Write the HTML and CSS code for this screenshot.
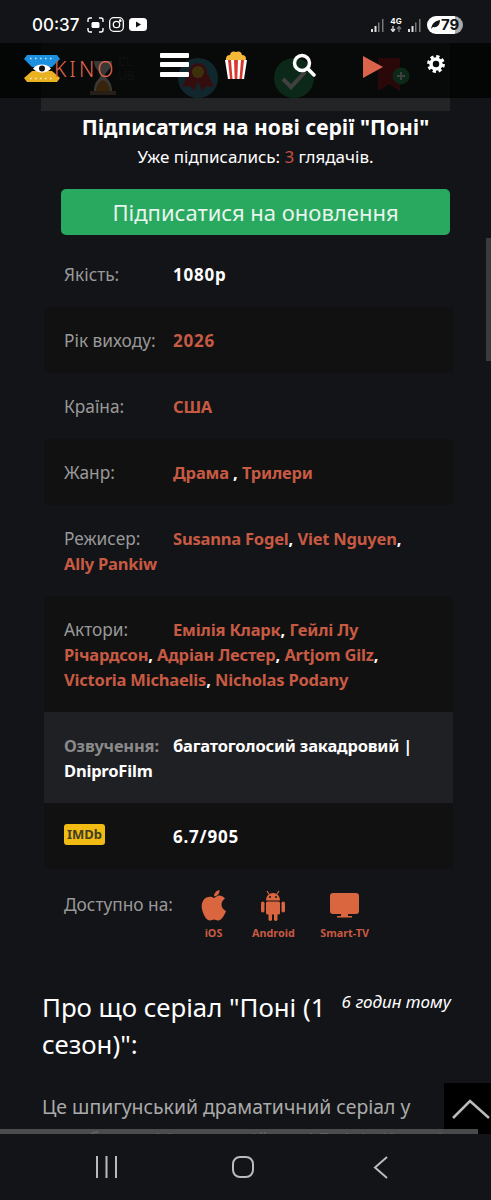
FILE: index.html
```html
<!DOCTYPE html>
<html lang="uk">
<head>
    <meta charset="utf-8">
    <meta content="initial-scale=1, width=device-width" name="viewport">
    <title>Поні</title>
    <link rel="stylesheet" href="styles.css">
</head>

<body>
    <div class="status">
        <span class="clock">00:37</span>
        <svg class="status-icon" width="17" height="16" viewBox="0 0 17 16" fill="none" stroke="#fff" stroke-width="1.4">
            <path d="M1 5V3a2 2 0 0 1 2-2h2M12 1h2a2 2 0 0 1 2 2v2M16 11v2a2 2 0 0 1-2 2h-2M5 15H3a2 2 0 0 1-2-2v-2"/>
            <rect x="4.500" y="5" width="8" height="6" rx="1.500" fill="#fff" stroke="none"/>
        </svg>
        <svg class="status-icon" width="15" height="15" viewBox="0 0 15 15" fill="none" stroke="#fff" stroke-width="1.300">
            <rect x="0.700" y="0.700" width="13.600" height="13.600" rx="4"/>
            <circle cx="7.500" cy="7.500" r="3.200"/>
            <circle cx="11.300" cy="3.700" r="0.700" fill="#fff"/>
        </svg>
        <svg class="status-icon" width="18" height="13" viewBox="0 0 18 13">
            <rect width="18" height="13" rx="3.500" fill="#fff"/>
            <path d="M7 3.500v6l5-3z" fill="#131417"/>
        </svg>
        <div class="status-right">
            <svg width="13" height="14" viewBox="0 0 13 14" fill="#777">
                <rect x="0" y="11" width="2" height="3" fill="#ddd"/><rect x="3.500" y="8" width="2" height="6" fill="#ddd"/><rect x="7" y="4.500" width="1.500" height="9.500"/><rect x="11" y="1" width="1.500" height="13"/>
            </svg>
            <span class="net">4G<svg width="12" height="6" viewBox="0 0 12 6" fill="none" stroke-width="1.300"><path d="M3 0v5M1 3l2 2.500L5 3" stroke="#ddd"/><path d="M9 6V1M7 3l2-2.500L11 3" stroke="#777"/></svg></span>
            <svg width="13" height="14" viewBox="0 0 13 14" fill="#777">
                <rect x="0" y="11" width="2" height="3" fill="#ddd"/><rect x="3.500" y="8" width="2" height="6" fill="#ddd"/><rect x="7" y="4.500" width="1.500" height="9.500"/><rect x="11" y="1" width="1.500" height="13"/>
            </svg>
            <span class="battery">
                <svg width="11" height="11" viewBox="0 0 11 11"><path d="M1 10C2 4 5 2 10 1 10 6 7 9 3 8z" fill="#131417"/></svg>79
            </span>
        </div>
    </div>

    <div class="page">
        <!-- icon strip that scrolled under the fixed menu -->
        <div class="actions">
            <svg class="action-hourglass" width="26" height="37" viewBox="0 0 26 37">
                <rect width="26" height="4" y="33" fill="#9c7a62"/>
                <path d="M4 3h18c0 8-6 10-7 14 1 4 7 6 7 16H4c0-10 6-12 7-16C10 13 4 11 4 3z" fill="#e9e3dc"/>
                <path d="M6 33c0-6 4-10 7-11 3 1 7 5 7 11z" fill="#e08b2e"/>
            </svg>
            <svg class="action-medal" width="40" height="40" viewBox="0 0 40 40">
                <circle cx="20" cy="20" r="20" fill="#3f9bb5"/>
                <path d="M10 16 4 29l8-1 4 5 5-12zM30 16l6 13-8-1-4 5-5-12z" fill="#d8343f"/>
                <circle cx="20" cy="14" r="9" fill="#d8343f"/>
                <circle cx="20" cy="14" r="6" fill="#f2c230"/>
            </svg>
            <svg class="action-check" width="40" height="40" viewBox="0 0 40 40">
                <circle cx="20" cy="20" r="20" fill="#2f9e5f"/>
                <path d="M9 21l8 8 14-15" fill="none" stroke="#fff" stroke-width="4"/>
            </svg>
            <svg class="action-mark" width="32" height="34" viewBox="0 0 32 34">
                <path d="M0 0h22v33L11 26 0 33z" fill="#a81d26"/>
                <circle cx="23" cy="18" r="8.500" fill="#2f9e5f"/>
                <path d="M23 14v8M19 18h8" stroke="#fff" stroke-width="2"/>
            </svg>
        </div>

        <div class="subscribe">
            <h2>Підписатися на нові серії "Поні"</h2>
            <p>Уже підписались: <span class="count">3</span> глядачів.</p>
            <button class="subscribe-btn">Підписатися на оновлення</button>
        </div>

        <ul class="info">
            <li><span class="label">Якість:</span><b class="num">1080p</b></li>
            <li class="dark"><span class="label">Рік виходу:</span><a class="num">2026</a></li>
            <li><span class="label">Країна:</span><a>США</a></li>
            <li class="dark"><span class="label">Жанр:</span><a>Драма</a> <b>,</b> <a>Трилери</a></li>
            <li><span class="label">Режисер:</span><a>Susanna Fogel</a><b>,</b> <a>Viet Nguyen</a><b>,</b> <a>Ally Pankiw</a></li>
            <li class="dark"><span class="label">Актори:</span><a>Емілія Кларк</a><b>,</b> <a>Гейлі Лу Річардсон</a><b>,</b> <a>Адріан Лестер</a><b>,</b> <a>Artjom Gilz</a><b>,</b> <a>Victoria Michaelis</a><b>,</b> <a>Nicholas Podany</a></li>
            <li class="light"><span class="label label-bold">Озвучення:</span><b>багатоголосий закадровий | DniproFilm</b></li>
            <li class="dark"><span class="label"><span class="imdb">IMDb</span></span><b class="num">6.7/905</b></li>
        </ul>

        <div class="platforms">
            <span class="platforms-label">Доступно на:</span>
            <div class="platform">
                <svg width="26" height="31" viewBox="0 0 26 31" fill="#d9663f">
                    <path d="M13 8C10 6 8 6.500 5.500 7.500 1.500 9.500 0 14 1 19c1 5 4 11 7.500 11.500 2 .2 3-1 4.500-1s2.500 1.200 4.500 1c3-.5 6-5 7.500-9.500-3-1.500-4.500-3.500-4.500-6.500 0-2.500 1.300-4.500 3.500-6-1.500-2-4-3.200-6.500-3C15.500 6 14.500 7.500 13 8z"/>
                    <path d="M13 6.500C13 3 15.500.5 18.500 0c.2 3.500-2 6-5.500 6.500z"/>
                </svg>
                <span>iOS</span>
            </div>
            <div class="platform">
                <svg width="24" height="31" viewBox="0 0 24 31" fill="#d9663f">
                    <path d="M5 10.500C5 6 8 3 12 3s7 3 7 7.500z"/>
                    <path d="M8 4 6 1M16 4l2-3" stroke="#d9663f" stroke-width="1.200"/>
                    <rect x="5" y="11.500" width="14" height="13" rx="1.500"/>
                    <rect x="0" y="11.500" width="3.500" height="11" rx="1.700"/>
                    <rect x="20.500" y="11.500" width="3.500" height="11" rx="1.700"/>
                    <rect x="7.500" y="23" width="3.500" height="8" rx="1.700"/>
                    <rect x="13" y="23" width="3.500" height="8" rx="1.700"/>
                    <circle cx="9" cy="7" r="1" fill="#131417"/>
                    <circle cx="15" cy="7" r="1" fill="#131417"/>
                </svg>
                <span>Android</span>
            </div>
            <div class="platform">
                <svg class="platform-tv" width="29" height="25" viewBox="0 0 29 25" fill="#d9663f">
                    <rect width="29" height="21" rx="3"/>
                    <path d="M11 21h7v2h4v1.500H7V23h4z"/>
                </svg>
                <span>Smart-TV</span>
            </div>
        </div>

        <div class="about">
            <span class="time">6 годин тому</span>
            <h2>Про що серіал "Поні (1 сезон)":</h2>
            <p>Це шпигунський драматичний серіал у виробництві (у головній ролі Емілія Кларк)</p>
        </div>

        <!-- fixed site menu -->
        <div class="menu">
            <div class="logo">
                <svg width="36" height="27" viewBox="0 0 36 27">
                    <path d="M0 4 3 0h30l3 4-8 8H8z" fill="#1b8fe0"/>
                    <path d="M8 16h20l8 7-3 4H3l-3-4z" fill="#eab120"/>
                    <path d="M9 13.500C13 8 23 8 27 13.500 23 19 13 19 9 13.500z" fill="#fff"/>
                    <circle cx="18" cy="13.500" r="3" fill="#111"/>
                    <path d="M6 3.500h24M6 23.500h24" stroke="#fff" stroke-width="1.500" stroke-dasharray="1.500 3.500" opacity=".8"/>
                </svg>
                <span class="logo-kino">KINO</span>
                <span class="logo-club">CL<br>UB</span>
            </div>
            <div class="burger"><i></i><i></i><i></i></div>
            <svg class="menu-popcorn" width="24" height="28" viewBox="0 0 24 28">
                <path d="M2 7a4 4 0 0 1 4-3 4 4 0 0 1 6-3 4 4 0 0 1 6 3 4 4 0 0 1 4 4l-1 3H2z" fill="#f5b93a"/>
                <path d="M1 9h22l-3 19H4z" fill="#fff"/>
                <path d="M4 9h3l1.500 19H6zM10 9h4l-.7 19h-2.600zM17 9h3l-2 19h-2.500z" fill="#d8392f"/>
            </svg>
            <svg class="menu-search" width="24" height="24" viewBox="0 0 24 24" fill="none" stroke="#fff">
                <circle cx="10" cy="10" r="7.500" stroke-width="3.500"/>
                <path d="M15.500 15.500l6.500 6.500" stroke-width="3.500" stroke-linecap="round"/>
            </svg>
            <svg class="menu-play" width="20" height="22" viewBox="0 0 20 22">
                <path d="M0 0l20 11L0 22z" fill="#d9644a"/>
            </svg>
            <svg class="menu-gear" width="18" height="18" viewBox="0 0 18 18" fill="none" stroke="#fff">
                <circle cx="9" cy="9" r="5" stroke-width="3.500"/>
                <circle cx="9" cy="9" r="7.400" stroke-width="3" stroke-dasharray="3.200 2.610"/>
            </svg>
        </div>

        <div class="vscroll"></div>
        <div class="to-top">
            <svg width="47" height="51" viewBox="0 0 47 51" fill="none">
                <path d="M9 35l17-17 19 17" stroke="#bbb" stroke-width="2.500"/>
            </svg>
        </div>
        <div class="hscroll"></div>
    </div>

    <div class="navbar">
        <svg width="21" height="22" viewBox="0 0 21 22" stroke="#bbb" stroke-width="2">
            <path d="M1 0v22M10.500 0v22M20 0v22"/>
        </svg>
        <span class="nav-home"></span>
        <svg width="15" height="23" viewBox="0 0 15 23" fill="none" stroke="#bbb" stroke-width="2">
            <path d="M14 1 2 11.500 14 22"/>
        </svg>
    </div>
</body>
</html>
```

FILE: styles.css
```css
* {
    box-sizing: border-box;
}
body {
    background-color: #131417;
    color: #fff;
    display: flex;
    flex-direction: column;
    font-family: "Noto Sans", sans-serif;
    height: 1200px;
    margin: 0;
    overflow: hidden;
}
.status {
    align-items: center;
    display: flex;
    flex: none;
    height: 43px;
    padding: 6px 28px 0 32px;
}
.clock {
    font-family: Inter, sans-serif;
    font-size: 17px;
    font-weight: 500;
    margin-right: 8px;
}
.status-icon {
    margin-right: 5px;
}
.status-right {
    align-items: center;
    display: flex;
    gap: 6px;
    margin-left: auto;
}
.net {
    align-items: center;
    display: flex;
    flex-direction: column;
    font-family: Inter, sans-serif;
    font-size: 8px;
    font-weight: 700;
    line-height: 9px;
}
.battery {
    align-items: center;
    background: linear-gradient(90deg, #fff 78%, #aaa 78%);
    border-radius: 9px;
    color: #131417;
    display: flex;
    font-family: Inter, sans-serif;
    font-size: 15px;
    font-weight: 700;
    height: 18px;
    padding: 0 3px;
    width: 36px;
}
.page {
    flex: 1;
    overflow: hidden;
    position: relative;
}
.actions {
    background-color: #232426;
    height: 68px;
    margin: 0 41px;
    padding-top: 15px;
    position: relative;
}
.actions svg {
    position: absolute;
    top: 15px;
}
.action-hourglass {
    left: 49px;
}
.action-medal {
    left: 137px;
}
.action-check {
    left: 233px;
}
.action-mark {
    left: 337px;
}
.subscribe {
    padding: 0 41px 0 61px;
    text-align: center;
}
.subscribe h2 {
    font-size: 21px;
    font-weight: 700;
    line-height: 32px;
    margin: 0 -10px;
}
.subscribe p {
    font-size: 17px;
    line-height: 24px;
    margin: 2px 0 20px;
}
.count {
    color: #c9503f;
}
.subscribe-btn {
    background-color: #29a85f;
    border: none;
    border-radius: 5px;
    color: #e8f5ed;
    display: block;
    font: inherit;
    font-size: 22px;
    height: 46px;
    padding: 0;
    width: 100%;
}
.info {
    font-size: 16.500px;
    line-height: 25px;
    list-style: none;
    margin: 6px 38px 0 44px;
    padding: 0;
}
.info li {
    padding: 20.500px 20px;
}
.info .dark {
    background-color: #111112;
}
.info .light {
    background-color: #1f2023;
}
.info a,
.info b {
    letter-spacing: -0.2px;
}
.info .num {
    font-size: 17px;
    letter-spacing: 0.8px;
}
.label {
    color: #999;
    display: inline-block;
    font-size: 17.300px;
    vertical-align: top;
    width: 109px;
}
.label-bold {
    color: #8a8a8a;
    font-size: 16.500px;
    font-weight: 700;
    letter-spacing: -0.2px;
}
.info a {
    color: #c75a42;
    font-weight: 700;
}
.imdb {
    background-color: #f2bb14;
    border-radius: 3px;
    color: #3f3f22;
    display: block;
    font-size: 13px;
    font-weight: 700;
    height: 21px;
    line-height: 21px;
    text-align: center;
    width: 41px;
}
.platforms {
    align-items: flex-start;
    display: flex;
    gap: 25.500px;
    margin: 21px 0 0 64px;
}
.platforms-label {
    color: #999;
    font-size: 17.300px;
    line-height: 25px;
    margin-right: -29px;
    margin-top: 1.500px;
    width: 140px;
}
.platform {
    align-items: center;
    color: #c75a42;
    display: flex;
    flex-direction: column;
    font-size: 10.800px;
    font-weight: 700;
    height: 51px;
    justify-content: space-between;
    line-height: 16px;
}
.platform-tv {
    margin-top: 3px;
}
.about {
    padding: 0 40px 0 42px;
    margin-top: 48px;
}
.about h2 {
    font-size: 25.800px;
    font-weight: 400;
    line-height: 37px;
    margin: 0 0 27px;
}
.about p {
    color: #aaa;
    font-size: 19.400px;
    line-height: 33px;
    margin: 0;
}
.time {
    float: right;
    font-size: 17px;
    font-style: italic;
    line-height: 22px;
    margin: 1.500px 0 0 8px;
}
.menu {
    align-items: center;
    background-color: rgba(0, 0, 0, 0.75);
    display: flex;
    height: 55px;
    left: 0;
    padding-left: 24px;
    position: absolute;
    right: 0;
    top: 0;
}
.logo {
    align-items: center;
    display: flex;
    margin-top: -4px;
    width: 136px;
}
.logo-kino {
    color: #e0664f;
    font-size: 21px;
    font-weight: 300;
    letter-spacing: 3px;
    line-height: 24px;
    margin-left: -6px;
}
.logo-club {
    color: #111;
    font-size: 12px;
    line-height: 14px;
    margin-left: 2px;
}
.burger {
    display: flex;
    flex-direction: column;
    gap: 4.500px;
    margin-bottom: 12px;
    width: 29px;
}
.burger i {
    background-color: #fff;
    border-radius: 1px;
    height: 5px;
}
.menu-popcorn {
    margin: -12px 0 0 35px;
}
.menu-search {
    margin: -12px 0 0 44px;
}
.menu-play {
    margin: -8px 0 0 47px;
}
.menu-gear {
    margin: -14px 0 0 44px;
}
.vscroll {
    background-color: #3a3b3d;
    height: 123px;
    position: absolute;
    right: 0;
    top: 195px;
    width: 5px;
}
.to-top {
    background-color: #000;
    bottom: 0;
    height: 51px;
    position: absolute;
    right: 0;
    width: 47px;
}
.hscroll {
    background-color: rgba(85, 86, 88, 0.85);
    bottom: 0;
    height: 5px;
    left: 0;
    position: absolute;
    width: 478px;
}
.navbar {
    align-items: center;
    display: flex;
    flex: none;
    height: 66px;
    justify-content: space-between;
    padding: 0 103px 0 96px;
}
.nav-home {
    border: 2px solid #bbb;
    border-radius: 8px;
    height: 22px;
    margin-right: 4px;
    width: 22px;
}
```
